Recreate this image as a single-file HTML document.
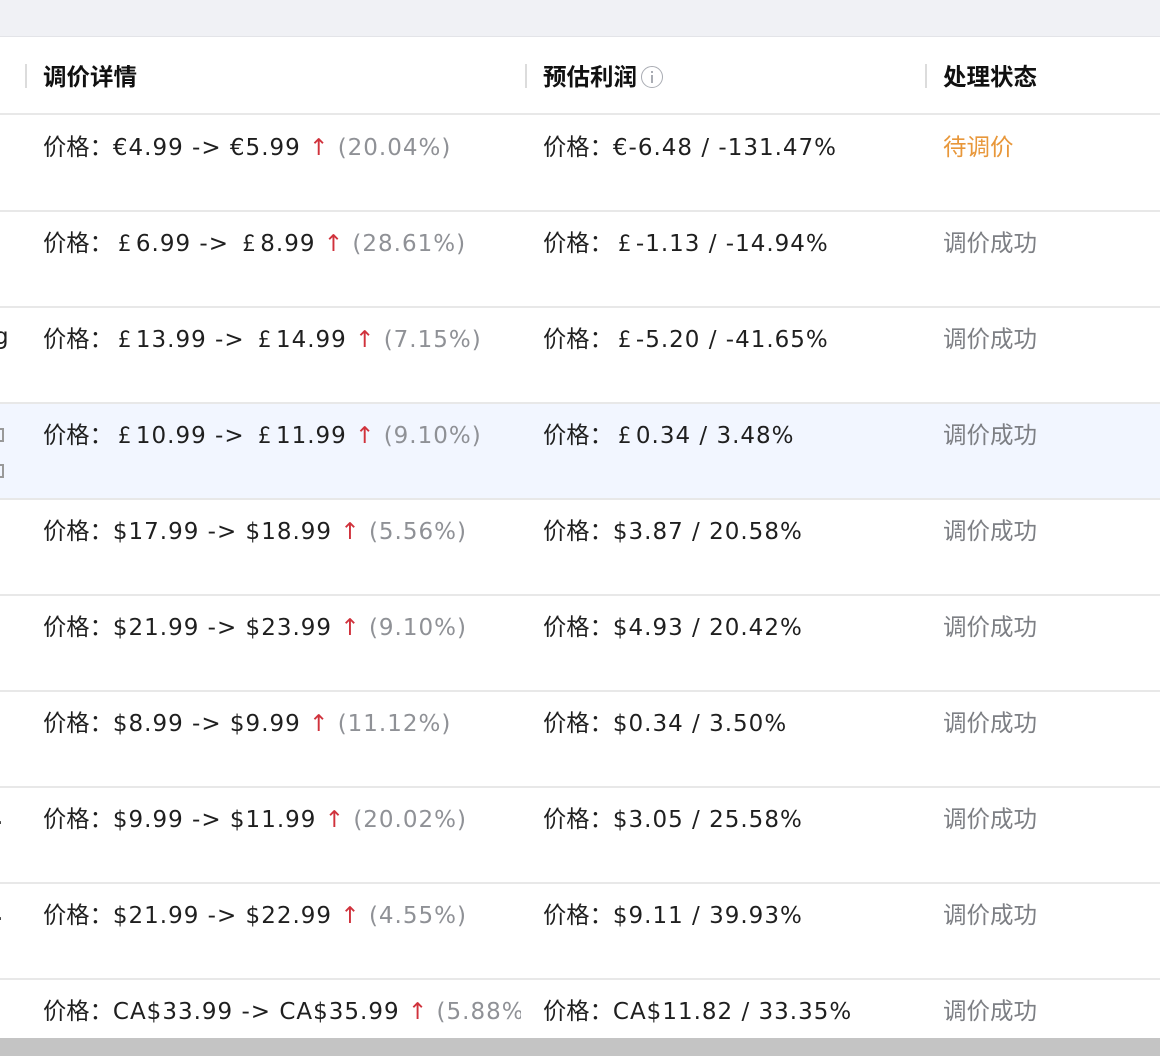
<!DOCTYPE html>
<html><head><meta charset="utf-8">
<style>
*{margin:0;padding:0;box-sizing:border-box}
body{width:1160px;height:1062px;background:#fff;position:relative;overflow:hidden;font-family:"DejaVu Sans","Noto Sans CJK SC",sans-serif;color:#1f1f1f}
.top{position:absolute;left:0;top:0;width:1160px;height:37px;background:#f0f1f5;border-bottom:1px solid #e3e4e8}
.hd{position:absolute;top:59px;font-size:23.5px;font-weight:bold;font-family:"Noto Sans CJK SC",sans-serif;color:#111;line-height:32px}
.sep{position:absolute;top:64px;width:2px;height:24px;background:#dcdcdc}
.line{position:absolute;left:0;width:1160px;height:2px;background:#e8e8e8}
.c{position:absolute;font-size:23px;white-space:nowrap;line-height:30px;letter-spacing:1px;margin-top:-2px}
.cn{font-family:"Noto Sans CJK SC",sans-serif;letter-spacing:0;font-size:23.3px}
.p{font-family:"Noto Sans CJK SC",sans-serif;letter-spacing:0;display:inline-block;width:23px;text-align:center}
.up{color:#d0323c}
.g{color:#8f9196}
.st{color:#7d7f84;font-family:"Noto Sans CJK SC",sans-serif;letter-spacing:0;font-size:23.5px}
.hl{position:absolute;left:0;top:404px;width:1160px;height:94px;background:#f2f6ff}
.sb{position:absolute;left:0;top:1038px;width:1160px;height:18px;background:#c4c4c4}
.info{display:inline-block;width:22px;height:22px;border:1.5px solid #a9acb3;border-radius:50%;vertical-align:-3px;position:relative;margin-left:4px}
.info:before{content:"";position:absolute;left:8.5px;top:4px;width:2px;height:2px;background:#a9acb3}
.info:after{content:"";position:absolute;left:8.5px;top:8px;width:2px;height:8px;background:#a9acb3}
</style></head><body>
<div class="top"></div>
<div class="sep" style="left:25px"></div>
<div class="sep" style="left:525px"></div>
<div class="sep" style="left:925px"></div>
<div class="hd" style="left:43px">调价详情</div>
<div class="hd" style="left:543px">预估利润<span class="info"></span></div>
<div class="hd" style="left:943px">处理状态</div>
<div class="line" style="top:113px"></div>
<div class="hl"></div>

<div class="c" style="left:43px;top:132px"><span class="cn">价格：</span>€4.99 -&gt; €5.99 <span class="up">↑</span> <span class="g">(20.04%)</span></div>
<div class="c" style="left:543px;top:132px"><span class="cn">价格：</span>€-6.48 / -131.47%</div>
<div class="c st" style="left:943px;top:132px;color:#e8973a">待调价</div>
<div class="line" style="top:210px"></div>

<div class="c" style="left:43px;top:228px"><span class="cn">价格：</span><span class="p">£</span>6.99 -&gt; <span class="p">£</span>8.99 <span class="up">↑</span> <span class="g">(28.61%)</span></div>
<div class="c" style="left:543px;top:228px"><span class="cn">价格：</span><span class="p">£</span>-1.13 / -14.94%</div>
<div class="c st" style="left:943px;top:228px">调价成功</div>
<div class="line" style="top:306px"></div>

<div class="c" style="left:-6px;top:324px">g</div>
<div class="c" style="left:43px;top:324px"><span class="cn">价格：</span><span class="p">£</span>13.99 -&gt; <span class="p">£</span>14.99 <span class="up">↑</span> <span class="g">(7.15%)</span></div>
<div class="c" style="left:543px;top:324px"><span class="cn">价格：</span><span class="p">£</span>-5.20 / -41.65%</div>
<div class="c st" style="left:943px;top:324px">调价成功</div>
<div class="line" style="top:402px"></div>

<div style="position:absolute;left:-4px;top:428px;width:8px;height:14px;border:2px solid #999"></div>
<div style="position:absolute;left:-4px;top:464px;width:8px;height:14px;border:2px solid #999"></div>
<div class="c" style="left:43px;top:420px"><span class="cn">价格：</span><span class="p">£</span>10.99 -&gt; <span class="p">£</span>11.99 <span class="up">↑</span> <span class="g">(9.10%)</span></div>
<div class="c" style="left:543px;top:420px"><span class="cn">价格：</span><span class="p">£</span>0.34 / 3.48%</div>
<div class="c st" style="left:943px;top:420px">调价成功</div>
<div class="line" style="top:498px"></div>

<div class="c" style="left:43px;top:516px"><span class="cn">价格：</span>$17.99 -&gt; $18.99 <span class="up">↑</span> <span class="g">(5.56%)</span></div>
<div class="c" style="left:543px;top:516px"><span class="cn">价格：</span>$3.87 / 20.58%</div>
<div class="c st" style="left:943px;top:516px">调价成功</div>
<div class="line" style="top:594px"></div>

<div class="c" style="left:43px;top:612px"><span class="cn">价格：</span>$21.99 -&gt; $23.99 <span class="up">↑</span> <span class="g">(9.10%)</span></div>
<div class="c" style="left:543px;top:612px"><span class="cn">价格：</span>$4.93 / 20.42%</div>
<div class="c st" style="left:943px;top:612px">调价成功</div>
<div class="line" style="top:690px"></div>

<div class="c" style="left:43px;top:708px"><span class="cn">价格：</span>$8.99 -&gt; $9.99 <span class="up">↑</span> <span class="g">(11.12%)</span></div>
<div class="c" style="left:543px;top:708px"><span class="cn">价格：</span>$0.34 / 3.50%</div>
<div class="c st" style="left:943px;top:708px">调价成功</div>
<div class="line" style="top:786px"></div>

<div class="c" style="left:-4px;top:804px">.</div>
<div class="c" style="left:43px;top:804px"><span class="cn">价格：</span>$9.99 -&gt; $11.99 <span class="up">↑</span> <span class="g">(20.02%)</span></div>
<div class="c" style="left:543px;top:804px"><span class="cn">价格：</span>$3.05 / 25.58%</div>
<div class="c st" style="left:943px;top:804px">调价成功</div>
<div class="line" style="top:882px"></div>

<div class="c" style="left:-4px;top:900px">.</div>
<div class="c" style="left:43px;top:900px"><span class="cn">价格：</span>$21.99 -&gt; $22.99 <span class="up">↑</span> <span class="g">(4.55%)</span></div>
<div class="c" style="left:543px;top:900px"><span class="cn">价格：</span>$9.11 / 39.93%</div>
<div class="c st" style="left:943px;top:900px">调价成功</div>
<div class="line" style="top:978px"></div>

<div class="c" style="left:43px;top:996px;width:478px;overflow:hidden"><span class="cn">价格：</span>CA$33.99 -&gt; CA$35.99 <span class="up">↑</span> <span class="g">(5.88%)</span></div>
<div class="c" style="left:543px;top:996px"><span class="cn">价格：</span>CA$11.82 / 33.35%</div>
<div class="c st" style="left:943px;top:996px">调价成功</div>
<div class="sb"></div>
</body></html>
